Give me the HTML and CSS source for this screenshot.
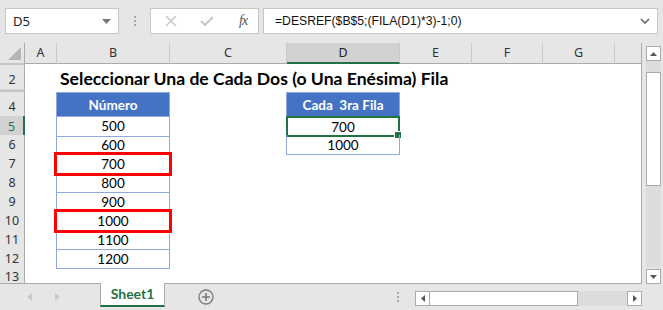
FILE: index.html
```html
<!DOCTYPE html>
<html lang="es">
<head>
    <meta charset="UTF-8">
    <meta name="viewport" content="width=device-width, initial-scale=1.0">
    <title>Seleccionar Una de Cada Dos Fila</title>
    <link rel="stylesheet" href="styles.css">
</head>
<body>
    <div class="bar">
        <div class="namebox">
            <span>D5</span>
            <svg class="caret" width="9" height="5" viewBox="0 0 9 5"><path d="M0 0h9L4.5 5z" fill="#777"/></svg>
        </div>
        <div class="grip"><i></i><i></i><i></i></div>
        <div class="fxbox">
            <svg width="12" height="12" viewBox="0 0 12 12"><path d="M1 1l10 10M11 1L1 11" stroke="#c4c4c4" stroke-width="1.4" fill="none"/></svg>
            <svg width="14" height="12" viewBox="0 0 14 12"><path d="M1 6l4 4 8-8" stroke="#c4c4c4" stroke-width="1.8" fill="none"/></svg>
            <span class="fx">fx</span>
        </div>
        <div class="formula">
            <span>=DESREF($B$5;(FILA(D1)*3)-1;0)</span>
            <svg width="10" height="6" viewBox="0 0 10 6"><path d="M1 1l4 4 4-4" stroke="#666" stroke-width="1.6" fill="none"/></svg>
        </div>
    </div>

    <div class="main">
        <div class="sheet">
            <div class="row head">
                <div class="corner"><svg width="13" height="13" viewBox="0 0 13 13"><path d="M13 0v13H0z" fill="#b5b5b5"/></svg></div>
                <div class="ch">A</div>
                <div class="ch">B</div>
                <div class="ch">C</div>
                <div class="ch sel">D</div>
                <div class="ch">E</div>
                <div class="ch">F</div>
                <div class="ch">G</div>
                <div class="ch last"></div>
            </div>
            <div class="row hidden"><div class="rh"></div></div>
            <div class="row r2">
                <div class="rh">2</div>
                <div class="title">Seleccionar Una de Cada Dos (o Una Enésima) Fila</div>
            </div>
            <div class="row hidden"><div class="rh"></div></div>
            <div class="row r4">
                <div class="rh">4</div>
                <div class="cell colb th">Número</div>
                <div class="cell cold th">Cada&nbsp; 3ra Fila</div>
            </div>
            <div class="row">
                <div class="rh sel">5</div>
                <div class="cell colb">500</div>
                <div class="cell cold active">700</div>
            </div>
            <div class="row">
                <div class="rh">6</div>
                <div class="cell colb">600</div>
                <div class="cell cold">1000</div>
            </div>
            <div class="row">
                <div class="rh">7</div>
                <div class="cell colb mark">700</div>
            </div>
            <div class="row">
                <div class="rh">8</div>
                <div class="cell colb">800</div>
            </div>
            <div class="row">
                <div class="rh">9</div>
                <div class="cell colb">900</div>
            </div>
            <div class="row">
                <div class="rh">10</div>
                <div class="cell colb mark">1000</div>
            </div>
            <div class="row">
                <div class="rh">11</div>
                <div class="cell colb">1100</div>
            </div>
            <div class="row">
                <div class="rh">12</div>
                <div class="cell colb">1200</div>
            </div>
            <div class="row">
                <div class="rh">13</div>
            </div>
        </div>
        <div class="vscroll">
            <div class="sbtn"><svg width="7" height="4" viewBox="0 0 7 4"><path d="M0 4h7L3.5 0z" fill="#555"/></svg></div>
            <div class="vtrack"><div class="vthumb"></div></div>
            <div class="sbtn"><svg width="7" height="4" viewBox="0 0 7 4"><path d="M0 0h7L3.5 4z" fill="#555"/></svg></div>
        </div>
    </div>

    <div class="tabs">
        <div class="nav">
            <svg width="5" height="8" viewBox="0 0 5 8"><path d="M5 0v8L0 4z" fill="#c8c8c8"/></svg>
            <svg width="5" height="8" viewBox="0 0 5 8"><path d="M0 0v8l5-4z" fill="#c8c8c8"/></svg>
        </div>
        <div class="tab">Sheet1</div>
        <div class="add">
            <svg width="16" height="16" viewBox="0 0 16 16"><circle cx="8" cy="8" r="7" fill="none" stroke="#7a7a7a" stroke-width="1.3"/><path d="M8 4v8M4 8h8" stroke="#7a7a7a" stroke-width="1.6"/></svg>
        </div>
        <div class="grip tabgrip"><i></i><i></i><i></i></div>
        <div class="hscroll">
            <div class="sbtn"><svg width="4" height="7" viewBox="0 0 4 7"><path d="M4 0v7L0 3.5z" fill="#555"/></svg></div>
            <div class="hthumb"></div>
            <div class="htrack"></div>
            <div class="sbtn"><svg width="4" height="7" viewBox="0 0 4 7"><path d="M0 0v7l4-3.5z" fill="#555"/></svg></div>
        </div>
    </div>
</body>
</html>
```

FILE: styles.css
```css
* {
    padding: 0;
    margin: 0;
    box-sizing: border-box;
}
body {
    width: 663px;
    height: 310px;
    overflow: hidden;
    background-color: #e6e6e6;
    font-family: 'Lato', sans-serif;
    color: #000;
}

/* formula bar */
.bar {
    height: 43px;
    display: flex;
    align-items: flex-start;
    padding: 8px 5px 0 5px;
}
.namebox {
    width: 114px;
    height: 26px;
    background-color: #fff;
    border: 1px solid #c6c6c6;
    display: flex;
    align-items: center;
    justify-content: space-between;
    padding: 0 7px 0 7px;
    font-family: 'Noto Sans', sans-serif;
    font-size: 13px;
    color: #222;
}
.grip {
    width: 31px;
    height: 26px;
    display: flex;
    flex-direction: column;
    align-items: center;
    justify-content: center;
    gap: 2px;
}
.grip i {
    width: 2px;
    height: 2px;
    background-color: #a8a8a8;
}
.fxbox {
    width: 109px;
    height: 26px;
    background-color: #fff;
    border: 1px solid #c6c6c6;
    display: flex;
    align-items: center;
    padding: 0 0 0 14px;
    gap: 23px;
}
.fx {
    font-family: 'Liberation Serif', serif;
    font-style: italic;
    font-size: 14px;
    color: #555;
    letter-spacing: -1px;
    margin-left: 2px;
}
.formula {
    flex: 1;
    margin-left: 4px;
    height: 26px;
    background-color: #fff;
    border: 1px solid #c6c6c6;
    display: flex;
    align-items: center;
    justify-content: space-between;
    padding: 0 7px 0 11px;
    font-family: 'Liberation Sans', sans-serif;
    font-size: 12.2px;
    color: #111;
}

/* sheet */
.main {
    display: flex;
    height: 241px;
}
.sheet {
    width: 642px;
    height: 241px;
    overflow: hidden;
    background-color: #fff;
    border-right: 1px solid #ababab;
    border-bottom: 1px solid #ababab;
}
.row {
    display: grid;
    grid-template-columns: 25px 32px 113px 117px 113px 72px 71px 72px 1fr;
    height: 19px;
}
.row.head {
    height: 20px;
    background-color: #e6e6e6;
}
.row.hidden {
    height: 2px;
}
.row.r2 {
    height: 25px;
}
.row.r4 {
    height: 24px;
}
.corner {
    display: flex;
    align-items: flex-end;
    justify-content: flex-end;
    padding: 0 3px 3px 0;
    border-right: 1px solid #ababab;
    border-bottom: 1px solid #ababab;
}
.ch {
    font-family: 'Noto Sans', sans-serif;
    font-size: 12.5px;
    color: #333;
    text-align: center;
    line-height: 19px;
    border-right: 1px solid #c8c8c8;
    border-bottom: 1px solid #ababab;
}
.ch.sel {
    background-color: #d2d2d2;
    border-bottom: 2px solid #217346;
    color: #222;
}
.ch.last {
    border-right: none;
}
.rh {
    grid-column: 1;
    background-color: #e6e6e6;
    border-right: 1px solid #ababab;
    border-bottom: 1px solid #d4d4d4;
    font-family: 'Noto Sans', sans-serif;
    font-size: 12.5px;
    color: #333;
    display: flex;
    align-items: flex-end;
    justify-content: center;
    line-height: 18px;
}
.rh.sel {
    background-color: #d2d2d2;
    border-right: 2px solid #217346;
    color: #217346;
}
.hidden .rh {
    border-bottom: 1px solid #c6c6c6;
    border-top: 1px solid #c6c6c6;
}
.title {
    grid-column: 2 / 10;
    padding-left: 35px;
    font-weight: bold;
    font-size: 17.6px;
    white-space: nowrap;
    display: flex;
    align-items: center;
    padding-top: 2px;
}
.cell {
    font-size: 13.5px;
    text-align: center;
    line-height: 18px;
    padding-top: 1px;
    border-left: 1px solid #8eaadb;
    border-right: 1px solid #8eaadb;
    border-bottom: 1px solid #8eaadb;
    margin-left: -1px;
    position: relative;
}
.colb {
    grid-column: 3;
}
.cold {
    grid-column: 5;
}
.cell.th {
    background-color: #4472c4;
    color: #fff;
    font-weight: bold;
    border-top: 1px solid #8eaadb;
    line-height: 22px;
}
.cell.mark {
    outline: 3px solid #ff0000;
    outline-offset: -1px;
    z-index: 2;
}
.cell.active {
    border: 2px solid #217346;
    line-height: 16px;
}
.cell.active::after {
    content: '';
    position: absolute;
    right: -4px;
    bottom: -4px;
    width: 6px;
    height: 6px;
    background-color: #217346;
    border: 1px solid #fff;
}

/* vertical scroll */
.vscroll {
    width: 21px;
    padding: 3px 2px 0 4px;
    display: flex;
    flex-direction: column;
}
.sbtn {
    width: 15px;
    height: 15px;
    background-color: #fff;
    border: 1px solid #ababab;
    display: flex;
    align-items: center;
    justify-content: center;
    flex-shrink: 0;
}
.vtrack {
    flex: 1;
    background-color: #dcdcdc;
    padding-top: 11px;
    margin-bottom: 2px;
}
.vthumb {
    height: 114px;
    background-color: #fff;
    border: 1px solid #ababab;
}

/* sheet tabs */
.tabs {
    height: 26px;
    display: flex;
    align-items: flex-start;
}
.nav {
    width: 100px;
    display: flex;
    gap: 23px;
    padding: 9px 0 0 27px;
}
.tab {
    width: 65px;
    height: 24px;
    background-color: #fff;
    margin-top: -1px;
    border-left: 1px solid #ababab;
    border-right: 1px solid #ababab;
    border-bottom: 2px solid #217346;
    color: #217346;
    font-weight: bold;
    font-size: 14px;
    text-align: center;
    line-height: 22px;
}
.add {
    width: 227px;
    padding: 5px 0 0 33px;
}
.tabgrip {
    width: 12px;
    height: 26px;
}
.hscroll {
    display: flex;
    margin: 7px 0 0 11px;
    width: 227px;
    height: 15px;
}
.hthumb {
    width: 148px;
    height: 15px;
    background-color: #fff;
    border: 1px solid #ababab;
    border-left: none;
}
.htrack {
    flex: 1;
    background-color: #dcdcdc;
}
```
